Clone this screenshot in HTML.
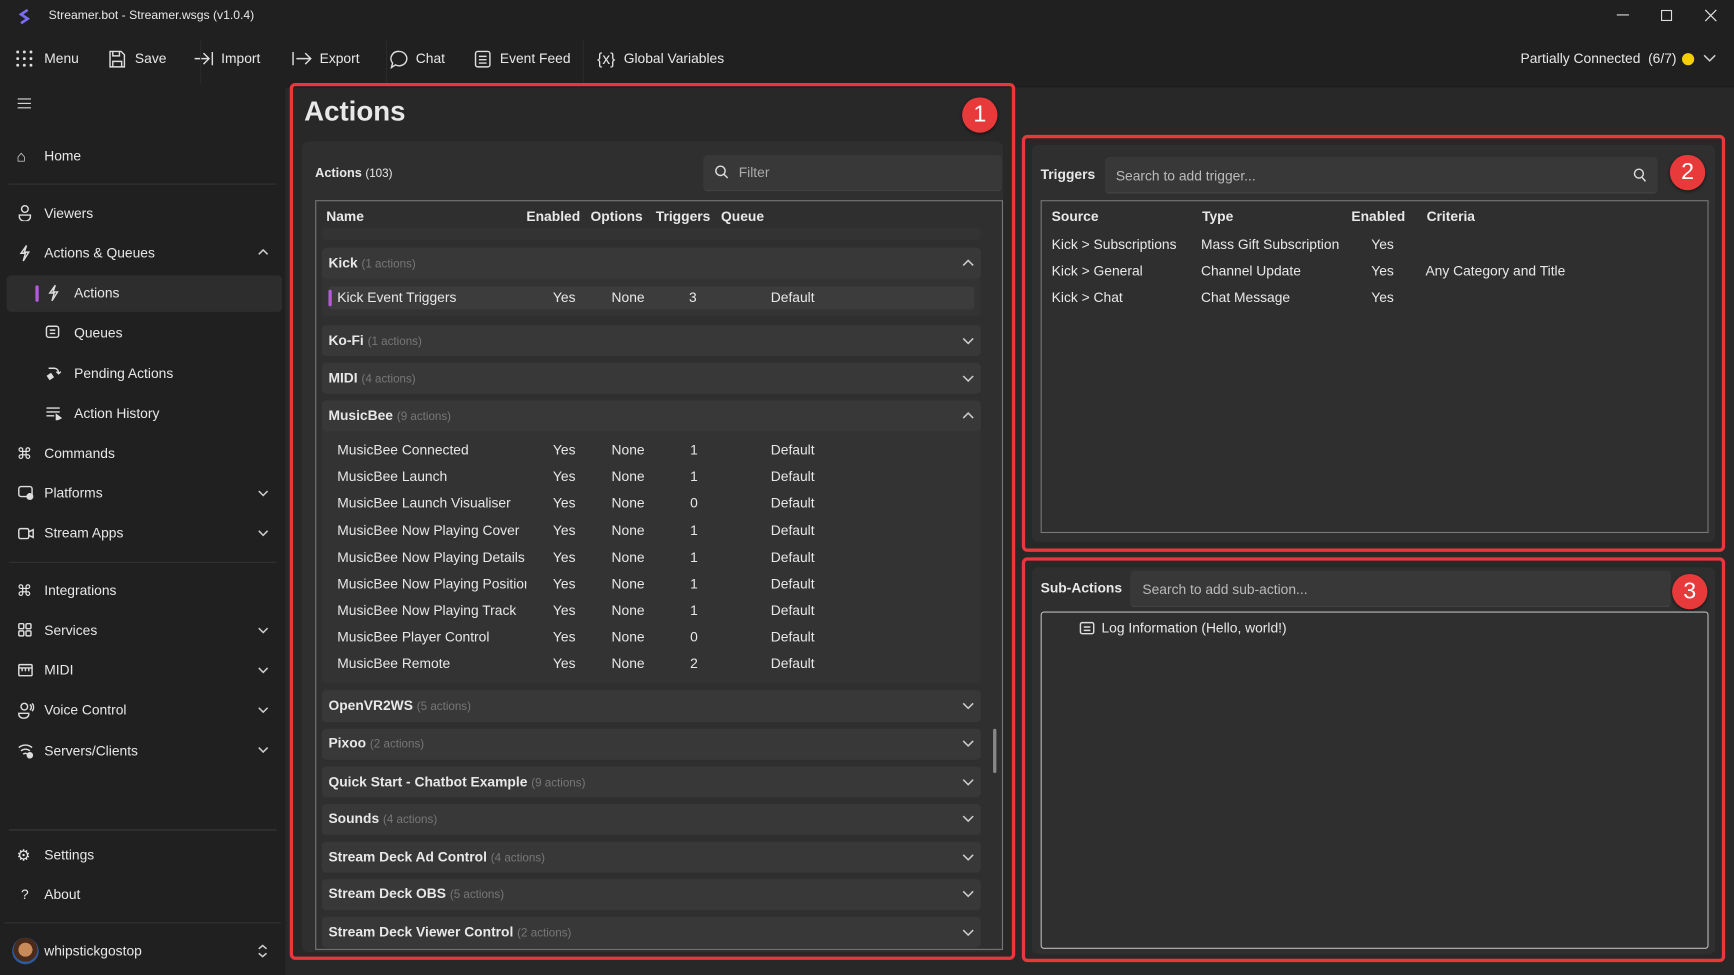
<!DOCTYPE html>
<html><head><meta charset="utf-8">
<style>
*{box-sizing:border-box;margin:0;padding:0}
html,body{width:1734px;height:975px;overflow:hidden;background:#282828}
#s{position:absolute;left:0;top:0;width:1568px;height:882px;transform:scale(1.10587);transform-origin:0 0;font-family:"Liberation Sans",sans-serif;font-size:12.5px;color:#e8e8e8;background:#282828}
.a{position:absolute;white-space:nowrap}
.t{line-height:18px;height:18px}
.b{font-weight:bold}
.dim{color:#777;font-weight:normal;font-size:10.5px}
.red{position:absolute;border:3px solid #e8383b;border-radius:5px}
.badge{position:absolute;width:32px;height:32px;border-radius:50%;background:#e83a3a;color:#fff;font-size:21px;line-height:32px;text-align:center;box-shadow:0 1px 3px rgba(0,0,0,.6)}
.grp{position:absolute;left:291px;width:596px;background:#383838;border-radius:4px}
.ico{position:absolute;stroke:#ddd;fill:none;stroke-width:1.3}
.chev{position:absolute;stroke:#ccc;fill:none;stroke-width:1.4}
.si{font-size:14px}
</style></head><body><div id="s">
<div class="a" style="left:0;top:0;width:1568px;height:78px;background:#202020"></div>
<div class="a" style="left:258px;top:78px;width:1310px;height:1px;background:#1a1a1a"></div>
<svg class="a" style="left:15px;top:7px" width="14" height="16" viewBox="0 0 14 16"><path d="M10 2 L4 6 L10 10 L4 14" stroke="#7b6cf6" stroke-width="2.4" fill="none"/></svg>
<div class="a t" style="left:44px;top:5px;font-size:11px">Streamer.bot - Streamer.wsgs (v1.0.4)</div>
<div class="a" style="left:1462px;top:13px;width:11px;height:1px;background:#ddd"></div>
<div class="a" style="left:1502px;top:9px;width:10px;height:10px;border:1px solid #ddd"></div>
<svg class="a" style="left:1541px;top:8px" width="12" height="12"><path d="M1 1L11 11M11 1L1 11" stroke="#ddd" stroke-width="1.1"/></svg>

<svg class="a" style="left:14px;top:45px" width="16" height="16"><g fill="#ddd"><circle cx="2" cy="2" r="1.3"/><circle cx="8" cy="2" r="1.3"/><circle cx="14" cy="2" r="1.3"/><circle cx="2" cy="8" r="1.3"/><circle cx="8" cy="8" r="1.3"/><circle cx="14" cy="8" r="1.3"/><circle cx="2" cy="14" r="1.3"/><circle cx="8" cy="14" r="1.3"/><circle cx="14" cy="14" r="1.3"/></g></svg>
<div class="a t" style="left:40px;top:44px">Menu</div>
<svg class="ico" style="left:98px;top:45px" width="16" height="17"><path d="M1.5 1.5h10l3 3v11h-13z M4 1.5v4h6v-4 M4 15.5v-5h8v5"/></svg>
<div class="a t" style="left:122px;top:44px">Save</div>
<svg class="ico" style="left:175px;top:46px" width="18" height="14"><path d="M1 7h13M9 2l5 5-5 5M17 1v12"/></svg>
<div class="a t" style="left:200px;top:44px">Import</div>
<svg class="ico" style="left:264px;top:46px" width="18" height="14"><path d="M1 1v12M4 7h13M12 2l5 5-5 5"/></svg>
<div class="a t" style="left:289px;top:44px">Export</div>
<svg class="ico" style="left:352px;top:45px" width="18" height="18"><path d="M9 1.5a7 6.5 0 1 1-3.5 12.2L2 16l1-4A7 6.5 0 0 1 9 1.5z"/></svg>
<div class="a t" style="left:376px;top:44px">Chat</div>
<svg class="ico" style="left:429px;top:45px" width="15" height="17"><rect x="1" y="1.5" width="13" height="14" rx="2"/><path d="M4 6h7M4 9h7M4 12h7"/></svg>
<div class="a t" style="left:452px;top:44px">Event Feed</div>
<div class="a t" style="left:540px;top:44px;font-size:14px">{x}</div>
<div class="a t" style="left:564px;top:44px">Global Variables</div>
<div class="a" style="left:181px;top:36px;width:1px;height:40px;background:#2a2a2a"></div>
<div class="a" style="left:349px;top:36px;width:1px;height:40px;background:#2a2a2a"></div>
<div class="a" style="left:527px;top:36px;width:1px;height:40px;background:#2a2a2a"></div>
<div class="a t" style="right:52px;top:44px">Partially Connected&nbsp; (6/7)</div>
<div class="a" style="left:1521px;top:48px;width:11px;height:11px;border-radius:50%;background:#f5d000"></div>
<svg class="chev" style="left:1540px;top:49px" width="12" height="8"><path d="M1 1l5 5 5-5"/></svg>

<div class="a" style="left:0;top:78px;width:258px;height:804px;background:#202020"></div>
<div class="a" style="left:16px;top:89px;width:12px;height:1.3px;background:#ddd;box-shadow:0 4px 0 #ddd,0 8px 0 #ddd"></div>
<div class="a" style="left:6px;top:249px;width:249px;height:33px;background:#2d2d2d;border-radius:4px"></div>
<div class="a" style="left:32px;top:258px;width:3px;height:15px;background:#b25ad8;border-radius:2px"></div>
<div class="a" style="left:8px;top:166px;width:242px;height:1px;background:#333"></div>
<div class="a" style="left:8px;top:508px;width:242px;height:1px;background:#333"></div>
<div class="a" style="left:8px;top:750px;width:242px;height:1px;background:#3a3a3a"></div>
<div class="a" style="left:4px;top:834px;width:250px;height:1px;background:#333"></div>

<div class="a t si" style="left:15px;top:132px">⌂</div><div class="a t" style="left:40px;top:132px">Home</div>
<svg class="ico" style="left:16px;top:185px" width="13" height="15"><circle cx="6.5" cy="4" r="3"/><path d="M1.5 9.5h10v1.5a5 4 0 0 1-10 0z"/></svg><div class="a t" style="left:40px;top:184px">Viewers</div>
<svg class="ico" style="left:17px;top:221px" width="11" height="16"><path d="M7 1L2 8h4l-2 7 5-8H5z"/></svg><div class="a t" style="left:40px;top:220px">Actions &amp; Queues</div>
<svg class="chev" style="left:233px;top:225px" width="10" height="6"><path d="M1 5l4-4 4 4"/></svg>
<svg class="ico" style="left:43px;top:257px" width="11" height="16"><path d="M7 1L2 8h4l-2 7 5-8H5z"/></svg><div class="a t" style="left:67px;top:256px">Actions</div>
<svg class="ico" style="left:41px;top:294px" width="14" height="13"><rect x="1" y="1" width="11" height="10" rx="2"/><path d="M4 4.5h5M4 7.5h5"/></svg><div class="a t" style="left:67px;top:292px">Queues</div>
<svg class="ico" style="left:41px;top:330px" width="15" height="15"><path d="M3 3h5a4 4 0 0 1 4 4v1M10 6l2 2 2-2"/><path d="M2 10l3-2 2 3-3 2z" fill="#ddd"/></svg><div class="a t" style="left:67px;top:329px">Pending Actions</div>
<svg class="ico" style="left:41px;top:367px" width="15" height="13"><path d="M1 2h12M1 5.5h12M1 9h7"/><path d="M10 8l4 3-4 2z" fill="#ddd"/></svg><div class="a t" style="left:67px;top:365px">Action History</div>
<div class="a t si" style="left:15px;top:401px">⌘</div><div class="a t" style="left:40px;top:401px">Commands</div>
<svg class="ico" style="left:16px;top:439px" width="15" height="13"><rect x="1" y="1" width="12" height="9" rx="2"/><circle cx="11" cy="10" r="2.5" fill="#ddd"/></svg><div class="a t" style="left:40px;top:437px">Platforms</div>
<svg class="ico" style="left:16px;top:477px" width="15" height="11"><rect x="1" y="1" width="9" height="9" rx="1.5"/><path d="M10 4l4-2v7l-4-2"/></svg><div class="a t" style="left:40px;top:473px">Stream Apps</div>
<div class="a t si" style="left:15px;top:525px">⌘</div><div class="a t" style="left:40px;top:525px">Integrations</div>
<svg class="ico" style="left:16px;top:563px" width="13" height="13"><rect x="1" y="1" width="4.5" height="4.5" rx="1"/><rect x="7.5" y="1" width="4.5" height="4.5" rx="1"/><rect x="1" y="7.5" width="4.5" height="4.5" rx="1"/><rect x="7.5" y="7.5" width="4.5" height="4.5" rx="1"/></svg><div class="a t" style="left:40px;top:561px">Services</div>
<svg class="ico" style="left:16px;top:600px" width="14" height="12"><rect x="1" y="1" width="12" height="10" rx="1"/><path d="M1 4h12M4 4v3M7 4v3M10 4v3"/></svg><div class="a t" style="left:40px;top:597px">MIDI</div>
<svg class="ico" style="left:16px;top:635px" width="15" height="15"><circle cx="6" cy="4" r="3"/><path d="M1 10h9v1a4.5 3.5 0 0 1-9 0zM11 2a3 3 0 0 1 0 5M13 1a5 5 0 0 1 0 7"/></svg><div class="a t" style="left:40px;top:633px">Voice Control</div>
<svg class="ico" style="left:16px;top:671px" width="15" height="15"><path d="M1 5a9 9 0 0 1 12 0M3 8a6 6 0 0 1 8 0M5 11a3 3 0 0 1 4 0"/><circle cx="11" cy="12" r="2.3" fill="#ddd"/></svg><div class="a t" style="left:40px;top:670px">Servers/Clients</div>
<svg class="chev" style="left:233px;top:443px" width="10" height="6"><path d="M1 1l4 4 4-4"/></svg>
<svg class="chev" style="left:233px;top:479px" width="10" height="6"><path d="M1 1l4 4 4-4"/></svg>
<svg class="chev" style="left:233px;top:567px" width="10" height="6"><path d="M1 1l4 4 4-4"/></svg>
<svg class="chev" style="left:233px;top:603px" width="10" height="6"><path d="M1 1l4 4 4-4"/></svg>
<svg class="chev" style="left:233px;top:639px" width="10" height="6"><path d="M1 1l4 4 4-4"/></svg>
<svg class="chev" style="left:233px;top:675px" width="10" height="6"><path d="M1 1l4 4 4-4"/></svg>
<div class="a t si" style="left:15px;top:764px">⚙</div><div class="a t" style="left:40px;top:764px">Settings</div>
<div class="a t" style="left:19px;top:800px">?</div><div class="a t" style="left:40px;top:800px">About</div>
<div class="a" style="left:11px;top:848px;width:24px;height:24px;border-radius:50%;background:radial-gradient(circle at 50% 45%,#c98a5a 0 35%,#4a2a1a 36% 60%,#2c5a9a 61%)"></div>
<div class="a t" style="left:40px;top:851px">whipstickgostop</div>
<svg class="chev" style="left:233px;top:854px" width="9" height="12"><path d="M1 4l3.5-3 3.5 3M1 8l3.5 3 3.5-3"/></svg>

<div class="red" style="left:262px;top:75px;width:656px;height:793px"></div>
<div class="a b" style="left:275px;top:86px;font-size:25px;line-height:30px">Actions</div>
<div class="badge" style="left:870px;top:88px">1</div>
<div class="a" style="left:273px;top:128px;width:634px;height:733px;background:#2f2f2f;border-radius:6px"></div>
<div class="a t" style="left:285px;top:148px;font-size:11.5px"><span style="font-weight:bold">Actions</span> <span style="font-size:10.5px">(103)</span></div>
<div class="a" style="left:636px;top:140px;width:270px;height:33px;background:#383838;border-radius:4px;border-bottom:1px solid #444"></div>
<svg class="ico" style="left:646px;top:149px" width="13" height="13"><circle cx="5.5" cy="5.5" r="4.2"/><path d="M8.5 8.5l3.5 3.5"/></svg>
<div class="a t" style="left:668px;top:147px;color:#aaa">Filter</div>
<div class="a" style="left:285px;top:181px;width:622px;height:678px;border:1px solid #777"></div>
<div class="a t b" style="left:295px;top:187px">Name</div>
<div class="a t b" style="left:476px;top:187px">Enabled</div>
<div class="a t b" style="left:534px;top:187px">Options</div>
<div class="a t b" style="left:593px;top:187px">Triggers</div>
<div class="a t b" style="left:652px;top:187px">Queue</div>
<div class="grp" style="top:206px;height:11px;background:#333"></div>

<div class="grp" style="top:224px;height:62px;background:#333"></div>
<div class="grp" style="top:224px;height:28px"></div>
<div class="a t b" style="left:297px;top:229px">Kick <span class="dim">(1 actions)</span></div>
<svg class="chev" style="left:870px;top:234px" width="11" height="7"><path d="M1 6l4.5-4.5 4.5 4.5"/></svg>
<div class="a" style="left:297px;top:259px;width:584px;height:21px;background:#3c3c3c;border-radius:3px"></div>
<div class="a" style="left:297px;top:262px;width:3px;height:15px;background:#b25ad8;border-radius:2px"></div>

<div class="grp" style="top:294px;height:28px"></div>
<div class="a t b" style="left:297px;top:299px">Ko-Fi <span class="dim">(1 actions)</span></div>
<div class="grp" style="top:328px;height:28px"></div>
<div class="a t b" style="left:297px;top:333px">MIDI <span class="dim">(4 actions)</span></div>
<div class="grp" style="top:362px;height:256px;background:#333"></div>
<div class="grp" style="top:362px;height:28px"></div>
<div class="a t b" style="left:297px;top:367px">MusicBee <span class="dim">(9 actions)</span></div>
<svg class="chev" style="left:870px;top:372px" width="11" height="7"><path d="M1 6l4.5-4.5 4.5 4.5"/></svg>

<div class="grp" style="top:624px;height:29px"></div><div class="a t b" style="left:297px;top:629px">OpenVR2WS <span class="dim">(5 actions)</span></div>
<div class="grp" style="top:659px;height:28px"></div><div class="a t b" style="left:297px;top:663px">Pixoo <span class="dim">(2 actions)</span></div>
<div class="grp" style="top:693px;height:28px"></div><div class="a t b" style="left:297px;top:698px">Quick Start - Chatbot Example <span class="dim">(9 actions)</span></div>
<div class="grp" style="top:727px;height:28px"></div><div class="a t b" style="left:297px;top:731px">Sounds <span class="dim">(4 actions)</span></div>
<div class="grp" style="top:761px;height:28px"></div><div class="a t b" style="left:297px;top:766px">Stream Deck Ad Control <span class="dim">(4 actions)</span></div>
<div class="grp" style="top:795px;height:28px"></div><div class="a t b" style="left:297px;top:799px">Stream Deck OBS <span class="dim">(5 actions)</span></div>
<div class="grp" style="top:829px;height:28px"></div><div class="a t b" style="left:297px;top:834px">Stream Deck Viewer Control <span class="dim">(2 actions)</span></div>
<svg class="chev" style="left:870px;top:305px" width="11" height="7"><path d="M1 1l4.5 4.5 4.5-4.5"/></svg>
<svg class="chev" style="left:870px;top:339px" width="11" height="7"><path d="M1 1l4.5 4.5 4.5-4.5"/></svg>
<svg class="chev" style="left:870px;top:635px" width="11" height="7"><path d="M1 1l4.5 4.5 4.5-4.5"/></svg>
<svg class="chev" style="left:870px;top:669px" width="11" height="7"><path d="M1 1l4.5 4.5 4.5-4.5"/></svg>
<svg class="chev" style="left:870px;top:704px" width="11" height="7"><path d="M1 1l4.5 4.5 4.5-4.5"/></svg>
<svg class="chev" style="left:870px;top:737px" width="11" height="7"><path d="M1 1l4.5 4.5 4.5-4.5"/></svg>
<svg class="chev" style="left:870px;top:772px" width="11" height="7"><path d="M1 1l4.5 4.5 4.5-4.5"/></svg>
<svg class="chev" style="left:870px;top:805px" width="11" height="7"><path d="M1 1l4.5 4.5 4.5-4.5"/></svg>
<svg class="chev" style="left:870px;top:840px" width="11" height="7"><path d="M1 1l4.5 4.5 4.5-4.5"/></svg>
<div class="a" style="left:898px;top:659px;width:3px;height:40px;background:#888;border-radius:2px"></div>

<div class="a t" style="left:305px;top:260px">Kick Event Triggers</div><div class="a t" style="left:500px;top:260px">Yes</div><div class="a t" style="left:553px;top:260px">None</div><div class="a t" style="left:623px;top:260px">3</div><div class="a t" style="left:697px;top:260px">Default</div>
<div class="a t" style="left:305px;top:398px">MusicBee Connected</div><div class="a t" style="left:500px;top:398px">Yes</div><div class="a t" style="left:553px;top:398px">None</div><div class="a t" style="left:624px;top:398px">1</div><div class="a t" style="left:697px;top:398px">Default</div>
<div class="a t" style="left:305px;top:422px">MusicBee Launch</div><div class="a t" style="left:500px;top:422px">Yes</div><div class="a t" style="left:553px;top:422px">None</div><div class="a t" style="left:624px;top:422px">1</div><div class="a t" style="left:697px;top:422px">Default</div>
<div class="a t" style="left:305px;top:446px">MusicBee Launch Visualiser</div><div class="a t" style="left:500px;top:446px">Yes</div><div class="a t" style="left:553px;top:446px">None</div><div class="a t" style="left:624px;top:446px">0</div><div class="a t" style="left:697px;top:446px">Default</div>
<div class="a t" style="left:305px;top:471px">MusicBee Now Playing Cover</div><div class="a t" style="left:500px;top:471px">Yes</div><div class="a t" style="left:553px;top:471px">None</div><div class="a t" style="left:624px;top:471px">1</div><div class="a t" style="left:697px;top:471px">Default</div>
<div class="a t" style="left:305px;top:495px">MusicBee Now Playing Details</div><div class="a t" style="left:500px;top:495px">Yes</div><div class="a t" style="left:553px;top:495px">None</div><div class="a t" style="left:624px;top:495px">1</div><div class="a t" style="left:697px;top:495px">Default</div>
<div class="a t" style="left:305px;top:519px;width:171px;overflow:hidden">MusicBee Now Playing Position</div><div class="a t" style="left:500px;top:519px">Yes</div><div class="a t" style="left:553px;top:519px">None</div><div class="a t" style="left:624px;top:519px">1</div><div class="a t" style="left:697px;top:519px">Default</div>
<div class="a t" style="left:305px;top:543px">MusicBee Now Playing Track</div><div class="a t" style="left:500px;top:543px">Yes</div><div class="a t" style="left:553px;top:543px">None</div><div class="a t" style="left:624px;top:543px">1</div><div class="a t" style="left:697px;top:543px">Default</div>
<div class="a t" style="left:305px;top:567px">MusicBee Player Control</div><div class="a t" style="left:500px;top:567px">Yes</div><div class="a t" style="left:553px;top:567px">None</div><div class="a t" style="left:624px;top:567px">0</div><div class="a t" style="left:697px;top:567px">Default</div>
<div class="a t" style="left:305px;top:591px">MusicBee Remote</div><div class="a t" style="left:500px;top:591px">Yes</div><div class="a t" style="left:553px;top:591px">None</div><div class="a t" style="left:624px;top:591px">2</div><div class="a t" style="left:697px;top:591px">Default</div>

<div class="red" style="left:924px;top:122px;width:636px;height:377px"></div>
<div class="a" style="left:933px;top:131px;width:618px;height:359px;background:#2f2f2f;border-radius:6px"></div>
<div class="a t b" style="left:941px;top:149px">Triggers</div>
<div class="a" style="left:999px;top:142px;width:500px;height:33px;background:#383838;border-radius:4px;border-bottom:1px solid #444"></div>
<div class="a t" style="left:1009px;top:150px;color:#bbb">Search to add trigger...</div>
<svg class="ico" style="left:1477px;top:152px" width="12" height="13"><circle cx="5" cy="5" r="4"/><path d="M8 8.5l3 3.5"/></svg>
<div class="badge" style="left:1510px;top:140px">2</div>
<div class="a" style="left:941px;top:181px;width:604px;height:301px;border:1px solid #777"></div>
<div class="a t b" style="left:951px;top:187px">Source</div><div class="a t b" style="left:1087px;top:187px">Type</div><div class="a t b" style="left:1222px;top:187px">Enabled</div><div class="a t b" style="left:1290px;top:187px">Criteria</div>
<div class="a t" style="left:951px;top:212px">Kick &gt; Subscriptions</div><div class="a t" style="left:1086px;top:212px">Mass Gift Subscription</div><div class="a t" style="left:1240px;top:212px">Yes</div>
<div class="a t" style="left:951px;top:236px">Kick &gt; General</div><div class="a t" style="left:1086px;top:236px">Channel Update</div><div class="a t" style="left:1240px;top:236px">Yes</div><div class="a t" style="left:1289px;top:236px">Any Category and Title</div>
<div class="a t" style="left:951px;top:260px">Kick &gt; Chat</div><div class="a t" style="left:1086px;top:260px">Chat Message</div><div class="a t" style="left:1240px;top:260px">Yes</div>

<div class="red" style="left:924px;top:504px;width:636px;height:366px"></div>
<div class="a" style="left:933px;top:513px;width:618px;height:350px;background:#2f2f2f;border-radius:6px"></div>
<div class="a t b" style="left:941px;top:523px">Sub-Actions</div>
<div class="a" style="left:1022px;top:516px;width:489px;height:33px;background:#383838;border-radius:4px;border-bottom:1px solid #444"></div>
<div class="a t" style="left:1033px;top:524px;color:#bbb">Search to add sub-action...</div>
<div class="badge" style="left:1512px;top:519px">3</div>
<div class="a" style="left:941px;top:553px;width:604px;height:305px;border:1px solid #bbb;border-radius:3px"></div>
<svg class="ico" style="left:976px;top:562px" width="14" height="12"><rect x="1" y="1" width="12" height="10" rx="1.5"/><path d="M4 5h6M4 8h6"/></svg>
<div class="a t" style="left:996px;top:559px">Log Information (Hello, world!)</div>
</div></body></html>
